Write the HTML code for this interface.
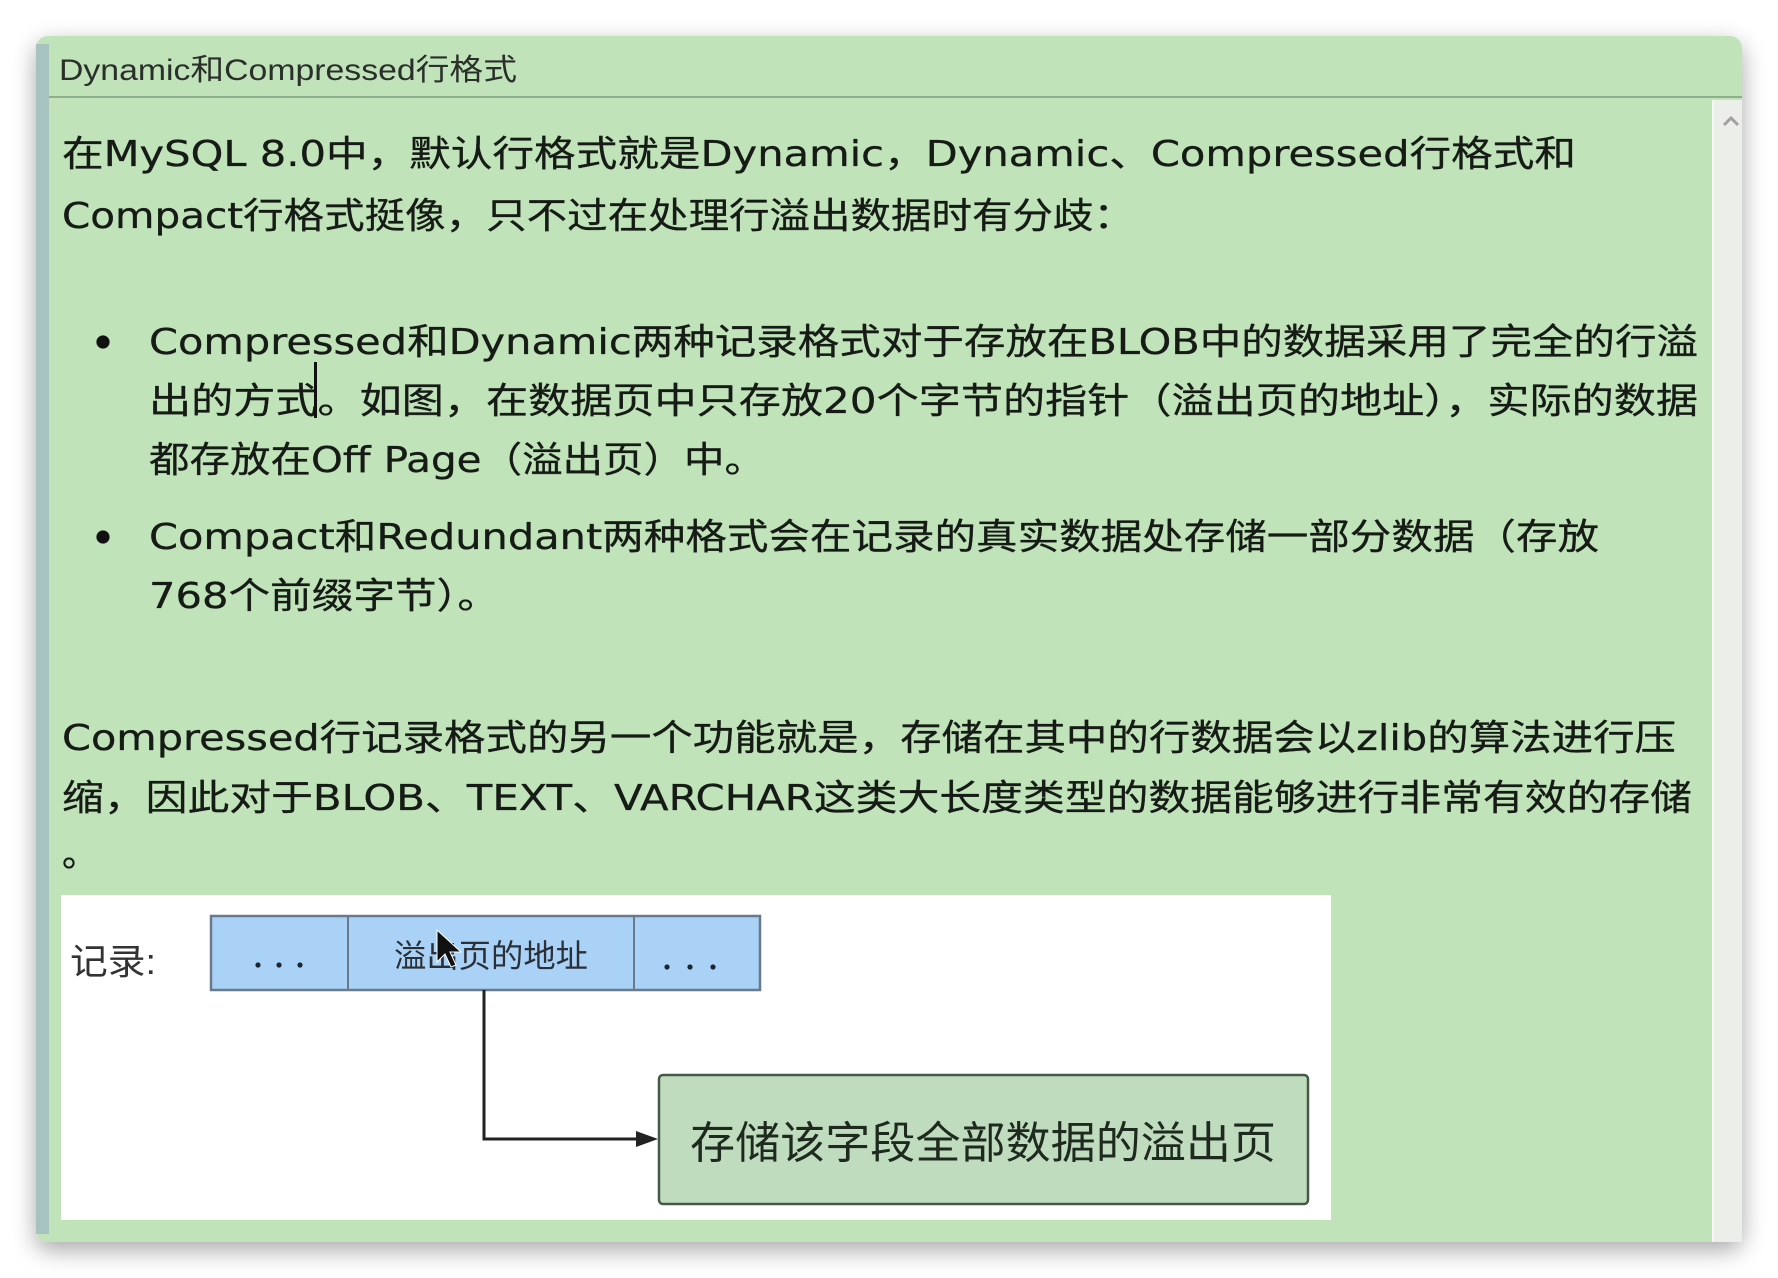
<!DOCTYPE html>
<html><head><meta charset="utf-8">
<style>
html,body{margin:0;padding:0;background:#fff;}
svg{display:block;}
</style></head>
<body>
<svg width="1778" height="1278" viewBox="0 0 1778 1278" xmlns="http://www.w3.org/2000/svg">
<defs>
<filter id="sh" x="-5%" y="-5%" width="110%" height="112%">
<feGaussianBlur in="SourceAlpha" stdDeviation="12"/>
<feOffset dx="0" dy="8"/>
<feComponentTransfer><feFuncA type="linear" slope="0.35"/></feComponentTransfer>
<feMerge><feMergeNode/><feMergeNode in="SourceGraphic"/></feMerge>
</filter>
</defs>
<rect x="0" y="0" width="1778" height="1278" fill="#ffffff"/>
<rect x="36" y="36" width="1706" height="1206" rx="12" fill="#c0e3ba" filter="url(#sh)"/>
<rect x="36" y="44" width="13" height="1190" fill="#a8c2bf"/>
<rect x="49" y="96" width="1693" height="2" fill="#8fae8a"/>
<rect x="1712" y="100" width="30" height="1142" fill="#eceee9"/>
<rect x="1712" y="100" width="2" height="1142" fill="#f6f7f4"/>
<path d="M1724 125 L1731 118 L1738 125" fill="none" stroke="#a0a0a0" stroke-width="3"/>

<g font-family="'DejaVu Sans','Noto Sans CJK SC',sans-serif" fill="#161b16" stroke="#161b16" stroke-width="0.3">
<text x="59" y="80" font-family="'Liberation Sans','Noto Sans CJK SC',sans-serif" font-size="30" textLength="458" lengthAdjust="spacingAndGlyphs" fill="#2a2f2a" stroke="none">Dynamic和Compressed行格式</text>

<g font-size="36">
<text x="62" y="166" textLength="1514" lengthAdjust="spacingAndGlyphs">在MySQL 8.0中，默认行格式就是Dynamic，Dynamic、Compressed行格式和</text>
<text x="62" y="228" textLength="1072" lengthAdjust="spacingAndGlyphs">Compact行格式挺像，只不过在处理行溢出数据时有分歧：</text>

<circle cx="103" cy="342" r="6.5" fill="#111"/>
<text x="149" y="354" textLength="1549" lengthAdjust="spacingAndGlyphs">Compressed和Dynamic两种记录格式对于存放在BLOB中的数据采用了完全的行溢</text>
<text x="149" y="413" textLength="1549" lengthAdjust="spacingAndGlyphs">出的方式。如图，在数据页中只存放20个字节的指针（溢出页的地址），实际的数据</text>
<rect x="314" y="362" width="3" height="56" fill="#111" stroke="none"/>
<text x="149" y="472" textLength="616" lengthAdjust="spacingAndGlyphs">都存放在Off Page（溢出页）中。</text>

<circle cx="103" cy="537" r="6.5" fill="#111"/>
<text x="149" y="549" textLength="1450" lengthAdjust="spacingAndGlyphs">Compact和Redundant两种格式会在记录的真实数据处存储一部分数据（存放</text>
<text x="149" y="608" textLength="350" lengthAdjust="spacingAndGlyphs">768个前缀字节）。</text>

<text x="62" y="750" textLength="1614" lengthAdjust="spacingAndGlyphs">Compressed行记录格式的另一个功能就是，存储在其中的行数据会以zlib的算法进行压</text>
<text x="62" y="810" textLength="1630" lengthAdjust="spacingAndGlyphs">缩，因此对于BLOB、TEXT、VARCHAR这类大长度类型的数据能够进行非常有效的存储</text>
<text x="62" y="866">。</text>
</g>
</g>

<rect x="61" y="895" width="1270" height="325" fill="#ffffff"/>
<text x="70" y="974" font-family="'Liberation Sans','Noto Sans CJK SC',sans-serif" font-size="36" textLength="86" lengthAdjust="spacingAndGlyphs" fill="#333">记录:</text>
<rect x="211" y="916" width="549" height="74" fill="#a9d2f6" stroke="#687a8c" stroke-width="2.5"/>
<line x1="348" y1="916" x2="348" y2="990" stroke="#687a8c" stroke-width="2"/>
<line x1="634" y1="916" x2="634" y2="990" stroke="#687a8c" stroke-width="2"/>
<g fill="#1c2530">
<circle cx="258" cy="965" r="2.6"/><circle cx="279" cy="965" r="2.6"/><circle cx="300" cy="965" r="2.6"/>
<circle cx="667" cy="967" r="2.6"/><circle cx="690" cy="967" r="2.6"/><circle cx="713" cy="967" r="2.6"/>
</g>
<text x="394" y="967" font-family="'Liberation Sans','Noto Sans CJK SC',sans-serif" font-size="32" textLength="194" lengthAdjust="spacingAndGlyphs" fill="#2a2f38">溢出页的地址</text>
<path d="M437 930 L437 962 L445 954 L451 967 L456 965 L450 952 L461 952 Z" fill="#111" stroke="#fff" stroke-width="1"/>
<path d="M484 990 L484 1139 L640 1139" fill="none" stroke="#222" stroke-width="3"/>
<path d="M636 1131 L658 1139 L636 1147 Z" fill="#222"/>
<rect x="659" y="1075" width="649" height="129" rx="4" fill="#c0dcbf" stroke="#445a44" stroke-width="2.5"/>
<text x="690" y="1158" font-family="'Liberation Sans','Noto Sans CJK SC',sans-serif" font-size="44" textLength="586" lengthAdjust="spacingAndGlyphs" fill="#1f2a1f">存储该字段全部数据的溢出页</text>
</svg>
</body></html>
